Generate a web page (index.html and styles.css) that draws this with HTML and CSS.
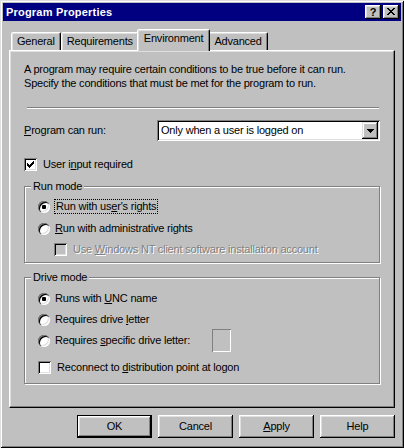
FILE: index.html
```html
<!DOCTYPE html>
<html>
<head>
<meta charset="utf-8">
<link rel="stylesheet" href="styles.css">
</head>
<body>
<div class="window">
  <div class="titlebar">
    <span class="title">Program Properties</span>
    <span class="tbtn tbtn-help">?</span>
    <span class="tbtn tbtn-close">
      <svg width="8" height="7" viewBox="0 0 8 7" shape-rendering="crispEdges"><path d="M0 0h2v1H0zM6 0h2v1H6zM1 1h2v1H1zM5 1h2v1H5zM2 2h4v1H2zM3 3h2v1H3zM2 4h4v1H2zM1 5h2v1H1zM5 5h2v1H5zM0 6h2v1H0zM6 6h2v1H6z" fill="#000"/></svg>
    </span>
  </div>

  <div class="tabs">
    <div class="tab">General</div>
    <div class="tab">Requirements</div>
    <div class="tab tab-active">Environment</div>
    <div class="tab">Advanced</div>
  </div>

  <div class="panel">
    <p class="desc">A program may require certain conditions to be true before it can run.<br>Specify the conditions that must be met for the program to run.</p>
    <div class="sep"></div>

    <div class="field-row">
      <span class="field-label"><u>P</u>rogram can run:</span>
      <div class="combo">
        <span class="combo-text">Only when a user is logged on</span>
        <span class="combo-btn">
          <svg width="7" height="4" viewBox="0 0 7 4" shape-rendering="crispEdges"><path d="M0 0h7v1H0zM1 1h5v1H1zM2 2h3v1H2zM3 3h1v1H3z" fill="#000"/></svg>
        </span>
      </div>
    </div>

    <div class="opt opt-top">
      <span class="check">
        <svg width="7" height="7" viewBox="0 0 7 7" shape-rendering="crispEdges"><path d="M6 0h1v1H6zM5 1h2v1H5zM0 2h1v1H0zM4 2h3v1H4zM0 3h2v1H0zM3 3h3v1H3zM0 4h5v1H0zM1 5h3v1H1zM2 6h1v1H2z" fill="#000"/></svg>
      </span>
      <span class="opt-text">User i<u>n</u>put required</span>
    </div>

    <fieldset class="group group-run">
      <legend>Run mode</legend>
      <div class="opt opt-radio">
        <span class="radio radio-on"></span>
        <span class="opt-text focus">Run with us<u>e</u>r's rights</span>
      </div>
      <div class="opt opt-radio opt-gap9">
        <span class="radio"></span>
        <span class="opt-text"><u>R</u>un with administrative rights</span>
      </div>
      <div class="opt opt-sub">
        <span class="check check-disabled"></span>
        <span class="opt-text disabled">Use <u>W</u>indows NT client software installation account</span>
      </div>
    </fieldset>

    <fieldset class="group group-drive">
      <legend>Drive mode</legend>
      <div class="opt opt-radio">
        <span class="radio radio-on"></span>
        <span class="opt-text">Runs with <u>U</u>NC name</span>
      </div>
      <div class="opt opt-radio opt-gap8">
        <span class="radio"></span>
        <span class="opt-text">Requires drive <u>l</u>etter</span>
      </div>
      <div class="opt opt-radio opt-letter">
        <span class="radio"></span>
        <span class="opt-text opt-letter-text">Requires <u>s</u>pecific drive letter:</span>
        <span class="letter-box"></span>
      </div>
      <div class="opt opt-reconnect">
        <span class="check"></span>
        <span class="opt-text">Reconnect to <u>d</u>istribution point at logon</span>
      </div>
    </fieldset>
  </div>

  <div class="buttons">
    <button class="btn btn-default">OK</button>
    <button class="btn">Cancel</button>
    <button class="btn"><u>A</u>pply</button>
    <button class="btn">Help</button>
  </div>
</div>
</body>
</html>
```

FILE: styles.css
```css
* { box-sizing: border-box; }
html, body {
  margin: 0;
  padding: 0;
  background: #c0c0c0;
}
body {
  font-family: "Liberation Sans", Arial, sans-serif;
  font-size: 11px;
  line-height: 13px;
  letter-spacing: -0.2px;
  color: #000;
  width: 404px;
  height: 448px;
  overflow: hidden;
}
u { text-underline-offset: 1px; }

.window {
  width: 404px;
  height: 448px;
  padding: 3px;
  background: #c0c0c0;
  box-shadow: inset 1px 1px #dfdfdf, inset -1px -1px #000, inset 2px 2px #fff, inset -2px -2px #808080;
  display: flex;
  flex-direction: column;
}

/* title bar */
.titlebar {
  flex: none;
  height: 18px;
  background: #000080;
  display: flex;
  align-items: center;
  padding: 0 2px 0 3px;
}
.title {
  flex: 1;
  color: #fff;
  font-weight: bold;
  letter-spacing: 0.2px;
}
.tbtn {
  width: 16px;
  height: 14px;
  background: #c0c0c0;
  box-shadow: inset -1px -1px #000, inset 1px 1px #fff, inset -2px -2px #808080, inset 2px 2px #dfdfdf;
  display: flex;
  align-items: center;
  justify-content: center;
  font-weight: bold;
  font-size: 11px;
  line-height: 12px;
  letter-spacing: 0;
}
.tbtn-close { margin-left: 2px; }
.tbtn-close svg { margin: 0 0 1px 0; display: block; }

/* tabs */
.tabs {
  flex: none;
  display: flex;
  align-items: flex-end;
  height: 21px;
  margin: 8px 6px 0;
  padding-left: 2px;
}
.tab {
  height: 18px;
  padding: 2px 5px 0;
  border: 1px solid;
  border-bottom: none;
  border-color: #fff #000 transparent #fff;
  border-radius: 2px 2px 0 0;
  box-shadow: inset -1px 0 #808080, inset 1px 1px #dfdfdf;
  background: #c0c0c0;
  text-align: center;
  white-space: nowrap;
}
.tab-active {
  position: relative;
  z-index: 1;
  height: 22px;
  margin: 0 -2px -1px;
  padding: 2px 6px 0;
}

/* panel */
.panel {
  flex: none;
  height: 358px;
  margin: 0 6px;
  padding: 11px 14px 0;
  border: 1px solid;
  border-color: #fff #000 #000 #fff;
  box-shadow: inset -1px -1px #808080, inset 1px 1px #dfdfdf;
  display: flex;
  flex-direction: column;
}
.desc {
  margin: 0;
  line-height: 14px;
  white-space: nowrap;
}
.sep {
  height: 2px;
  margin: 17px 1px 0 3px;
  border-top: 1px solid #808080;
  border-bottom: 1px solid #fff;
}

.field-row {
  display: flex;
  align-items: center;
  margin-top: 11px;
}
.field-label { width: 133px; flex: none; }
.combo {
  flex: 1;
  height: 21px;
  background: #fff;
  box-shadow: inset 1px 1px #808080, inset -1px -1px #fff, inset 2px 2px #000, inset -2px -2px #dfdfdf;
  display: flex;
  align-items: center;
  padding: 2px;
}
.combo-text { flex: 1; padding-left: 2px; }
.combo-btn {
  width: 16px;
  height: 17px;
  background: #c0c0c0;
  box-shadow: inset -1px -1px #000, inset 1px 1px #dfdfdf, inset -2px -2px #808080, inset 2px 2px #fff;
  display: flex;
  align-items: center;
  justify-content: center;
}
.combo-btn svg { display: block; }

/* options */
.opt {
  display: flex;
  align-items: center;
  height: 13px;
}
.opt-top { margin-top: 17px; }
.opt-text { margin-left: 6px; white-space: nowrap; }
.check {
  flex: none;
  width: 13px;
  height: 13px;
  background: #fff;
  box-shadow: inset 1px 1px #808080, inset -1px -1px #fff, inset 2px 2px #000, inset -2px -2px #dfdfdf;
  display: flex;
  padding: 3px;
}
.check svg { display: block; }
.check-disabled { background: #c0c0c0; }
.disabled { color: #808080; text-shadow: 1px 1px 0 #fff; }

.radio {
  flex: none;
  width: 12px;
  height: 12px;
  border-radius: 50%;
  background: #fff;
  box-shadow: inset 1px 1px #808080, inset 2px 2px #000, inset -1px -1px #fff, inset -2px -2px #dfdfdf;
  display: flex;
  align-items: center;
  justify-content: center;
}
.radio-on::after {
  content: "";
  width: 4px;
  height: 4px;
  border-radius: 1px;
  background: #000;
}
.focus { outline: 1px dotted #000; outline-offset: 0; padding: 0 1px; margin-left: 5px; }

/* groups */
.group {
  margin: 9px 0 0;
  padding: 7px 0 6px 0;
  border: 1px solid #808080;
  box-shadow: inset 1px 1px #fff, 1px 1px #fff;
  min-width: 0;
}
.group legend {
  margin-left: 6px;
  padding: 0 2px;
  background: #c0c0c0;
  line-height: 13px;
}
.group .opt { margin-left: 13px; }
.opt-radio .opt-text { margin-left: 5px; }
.opt-gap9 { margin-top: 9px; }
.opt-gap8 { margin-top: 8px; }
.opt-sub { margin-top: 8px; padding-left: 16px; }

.group-drive { margin-top: 8px; padding-top: 8px; padding-bottom: 9px; }
.opt-letter { margin-top: 3px; height: 23px; }
.opt-letter-text { width: 157px; }
.letter-box {
  width: 19px;
  height: 23px;
  box-shadow: inset 1px 1px #808080, inset -1px -1px #fff;
}
.opt-reconnect { margin-top: 9px; }

/* buttons */
.buttons {
  flex: none;
  display: flex;
  justify-content: flex-end;
  gap: 6px;
  margin: 7px 6px 0;
}
.btn {
  width: 75px;
  height: 23px;
  padding: 0;
  border: none;
  background: #c0c0c0;
  font: inherit;
  letter-spacing: inherit;
  color: #000;
  box-shadow: inset -1px -1px #000, inset 1px 1px #fff, inset -2px -2px #808080, inset 2px 2px #dfdfdf;
}
.btn-default {
  box-shadow: inset 0 0 0 1px #000, inset -2px -2px #000, inset 2px 2px #fff, inset -3px -3px #808080, inset 3px 3px #dfdfdf;
}
```
